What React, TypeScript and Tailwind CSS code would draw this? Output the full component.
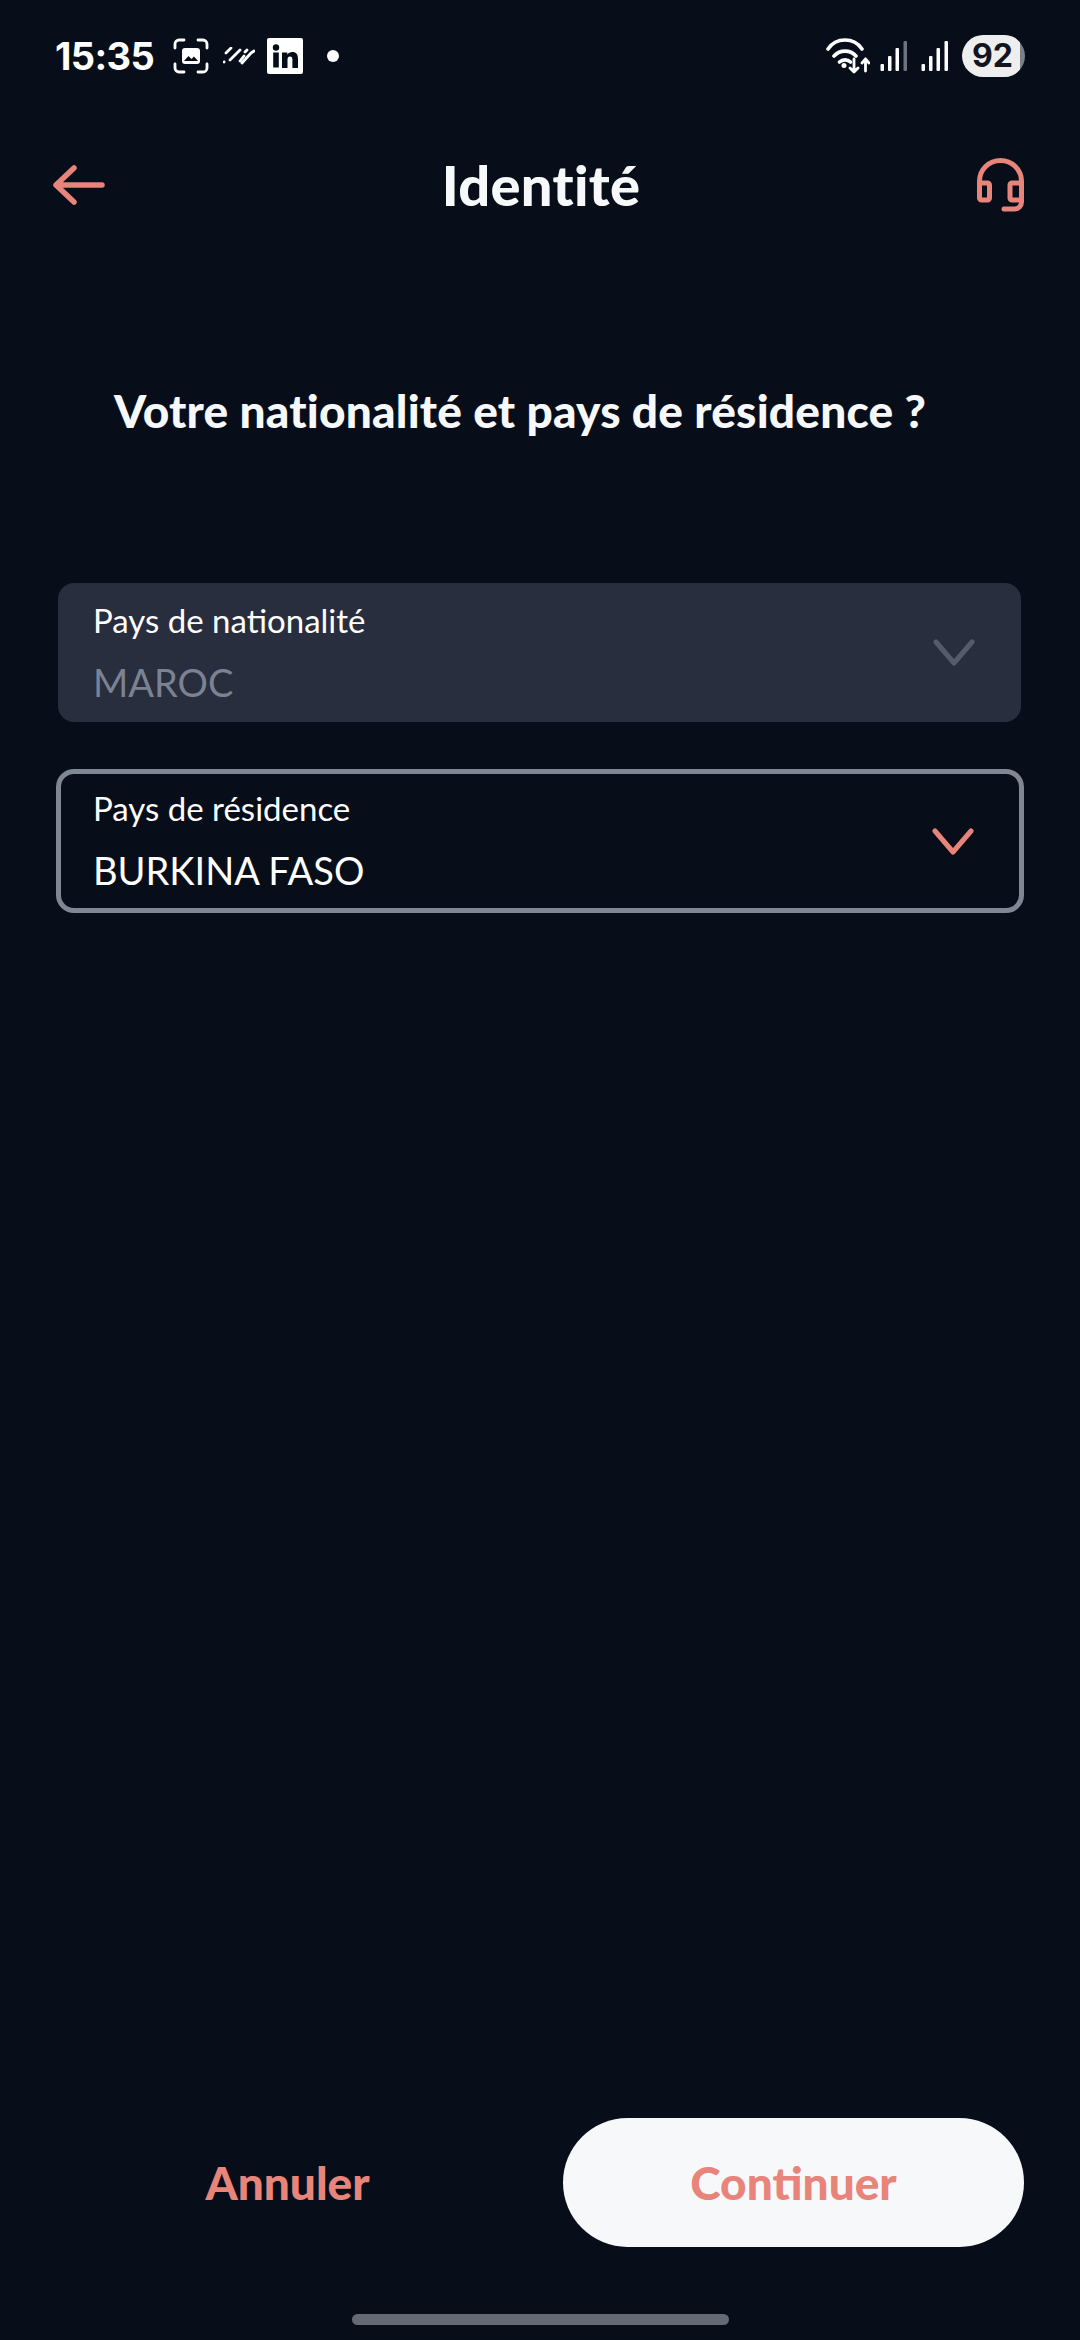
const fontSans = "font-['Lato','Liberation_Sans',sans-serif]";

function StatusBar() {
  return (
    <div className="flex h-[42px] items-center justify-between pl-[55px] pr-[55px] font-['Inter',sans-serif] text-white">
      <div className="flex items-center">
        <span className="text-[38px] leading-none font-bold tracking-[-0.6px]">15:35</span>
        <svg className="ml-[19px]" width="36" height="36" viewBox="0 0 36 36" fill="none">
          <path d="M2 10V6a4 4 0 0 1 4-4h5M25 2h5a4 4 0 0 1 4 4v4M34 26v4a4 4 0 0 1-4 4h-5M11 34H6a4 4 0 0 1-4-4v-4" stroke="white" strokeWidth="2.8" strokeLinecap="round" />
          <rect x="9" y="10" width="18" height="16" rx="3" fill="white" />
          <path d="M11 23l4.500-5 3 3 2.500-2.500 4 4.500z" fill="#060d1a" />
        </svg>
        <svg className="ml-[14px]" width="32" height="18" viewBox="0 0 32 18" fill="none" stroke="white" strokeWidth="2.8" strokeLinecap="round">
          <path d="M3 6l5-5M1 15h.1M7 13L17 3M17 14l4-5M22 5l2-2M19 16l9-10M28 6l3-2" />
        </svg>
        <svg className="ml-[12px]" width="36" height="36" viewBox="0 0 36 36">
          <rect width="36" height="36" rx="2" fill="white" />
          <circle cx="9" cy="9.500" r="3.200" fill="#060d1a" />
          <rect x="6.200" y="14.500" width="5.600" height="15" fill="#060d1a" />
          <path d="M15 14.500h5.300v2.200c1-1.600 2.800-2.600 5-2.600 4 0 5.700 2.500 5.700 6.700v9.200h-5.600v-8.200c0-2-.6-3.200-2.400-3.200-1.900 0-2.500 1.400-2.500 3.300v8.100H15z" fill="#060d1a" />
        </svg>
        <span className="ml-[24px] h-[12px] w-[12px] rounded-full bg-white" />
      </div>
      <div className="flex items-center">
        <svg width="44" height="36" viewBox="0 0 44 36" fill="none" stroke="white" strokeLinecap="round" strokeLinejoin="round">
          <path d="M2 11C10 -1 28 -1 36 11M8 18c6-6.500 16-6.500 22 0M13.500 24c3-2.800 8-2.800 11 0" strokeWidth="3.600" />
          <circle cx="18" cy="27.500" r="2.500" fill="white" stroke="none" />
          <path d="M28 21v13M24 30l4 4 4-4M39.500 33V21M36 25l3.500-4 3.500 4" strokeWidth="2.800" />
        </svg>
        <svg className="ml-[10px]" width="27" height="30" viewBox="0 0 27 30" fill="white">
          <rect x="0.500" y="23" width="3.500" height="7" rx="1" />
          <rect x="8" y="15" width="3.500" height="15" rx="1" />
          <rect x="15.500" y="7" width="3.500" height="23" rx="1" />
          <rect x="23.500" y="0" width="3.500" height="30" rx="1" fill="#6b7280" />
        </svg>
        <svg className="ml-[14px]" width="27" height="30" viewBox="0 0 27 30" fill="white">
          <rect x="0.500" y="23" width="3.500" height="7" rx="1" />
          <rect x="8" y="15" width="3.500" height="15" rx="1" />
          <rect x="15.500" y="7" width="3.500" height="23" rx="1" />
          <rect x="23.500" y="0" width="3.500" height="30" rx="1" />
        </svg>
        <div className="ml-[14px] flex h-[42px] w-[63px] overflow-hidden rounded-full bg-[#7b7f87]">
          <div className="flex h-full w-[58px] items-center justify-center rounded-l-full bg-[#eeeeef] pl-[3px] text-[32px] leading-none font-bold text-[#12151d]">
            92
          </div>
        </div>
      </div>
    </div>
  );
}

function Chevron({ color }: { color: string }) {
  return (
    <svg width="42" height="27" viewBox="0 0 42 27" fill="none" stroke={color} strokeWidth="5" strokeLinecap="round" strokeLinejoin="round">
      <path d="M3 3l18 21L39 3" />
    </svg>
  );
}

function SelectField({ label, value, disabled }: { label: string; value: string; disabled?: boolean }) {
  return (
    <div
      className={
        disabled
          ? "ml-[2px] mr-[3px] flex h-[139px] items-center justify-between rounded-[16px] bg-[#282e3d] pl-[35px] pr-[46px]"
          : "flex h-[144px] items-center justify-between rounded-[18px] border-[5px] border-[#7f8694] pl-[32px] pr-[45px]"
      }
    >
      <div className="flex flex-col">
        <span className="text-[33px] leading-[40px] font-normal text-white">{label}</span>
        <span className={disabled ? "mt-[18px] text-[38px] leading-[48px] text-[#7b8294]" : "mt-[18px] text-[38px] leading-[48px] text-white"}>
          {value}
        </span>
      </div>
      <Chevron color={disabled ? "#545b6b" : "#e8847a"} />
    </div>
  );
}

export default function App() {
  return (
    <div className={`flex h-[2340px] w-[1080px] flex-col overflow-hidden bg-[#070e1a] pt-[35px] ${fontSans}`}>
      <StatusBar />

      <header className="mt-[80px] flex h-[56px] items-center justify-between pl-[53px] pr-[55px]">
        <svg width="52" height="40" viewBox="0 0 52 40" fill="none" stroke="#e8847a" strokeWidth="5.500" strokeLinecap="round" strokeLinejoin="round">
          <path d="M49 20H4M21 3L3 20l18 17" />
        </svg>
        <h1 className="text-[56px] leading-none font-black tracking-[0.3px] text-[#f7f8fa]">Identité</h1>
        <svg width="48" height="54" viewBox="0 0 48 54" fill="none" stroke="#e8847a" strokeWidth="5" strokeLinecap="round" strokeLinejoin="round">
          <path d="M2.500 34V23a21 20.500 0 0 1 42 0v21a7 7 0 0 1-7 7H27" />
          <rect x="2.500" y="25" width="10" height="17" rx="2" />
          <rect x="33" y="25" width="11.500" height="17" rx="2" />
        </svg>
      </header>

      <h2 className="mt-[170px] pl-[114px] text-left text-[46px] leading-[56px] font-black tracking-[0.2px] text-[#f7f8fa]">
        Votre nationalité et pays de résidence ?
      </h2>

      <main className="mt-[144px] flex flex-col gap-[47px] px-[56px]">
        <SelectField label="Pays de nationalité" value="MAROC" disabled />
        <SelectField label="Pays de résidence" value="BURKINA FASO" />
      </main>

      <footer className="mt-auto flex items-center pl-[12px] pr-[56px]">
        <button className="flex-1 text-center text-[46px] leading-none font-black text-[#e8847a]">Annuler</button>
        <button className="flex h-[129px] w-[461px] items-center justify-center rounded-full bg-[#f7f8fa] text-[46px] leading-none font-black text-[#e8847a]">
          Continuer
        </button>
      </footer>

      <div className="mt-[67px] mb-[15px] flex justify-center">
        <div className="h-[11px] w-[377px] rounded-full bg-[#646973]" />
      </div>
    </div>
  );
}
